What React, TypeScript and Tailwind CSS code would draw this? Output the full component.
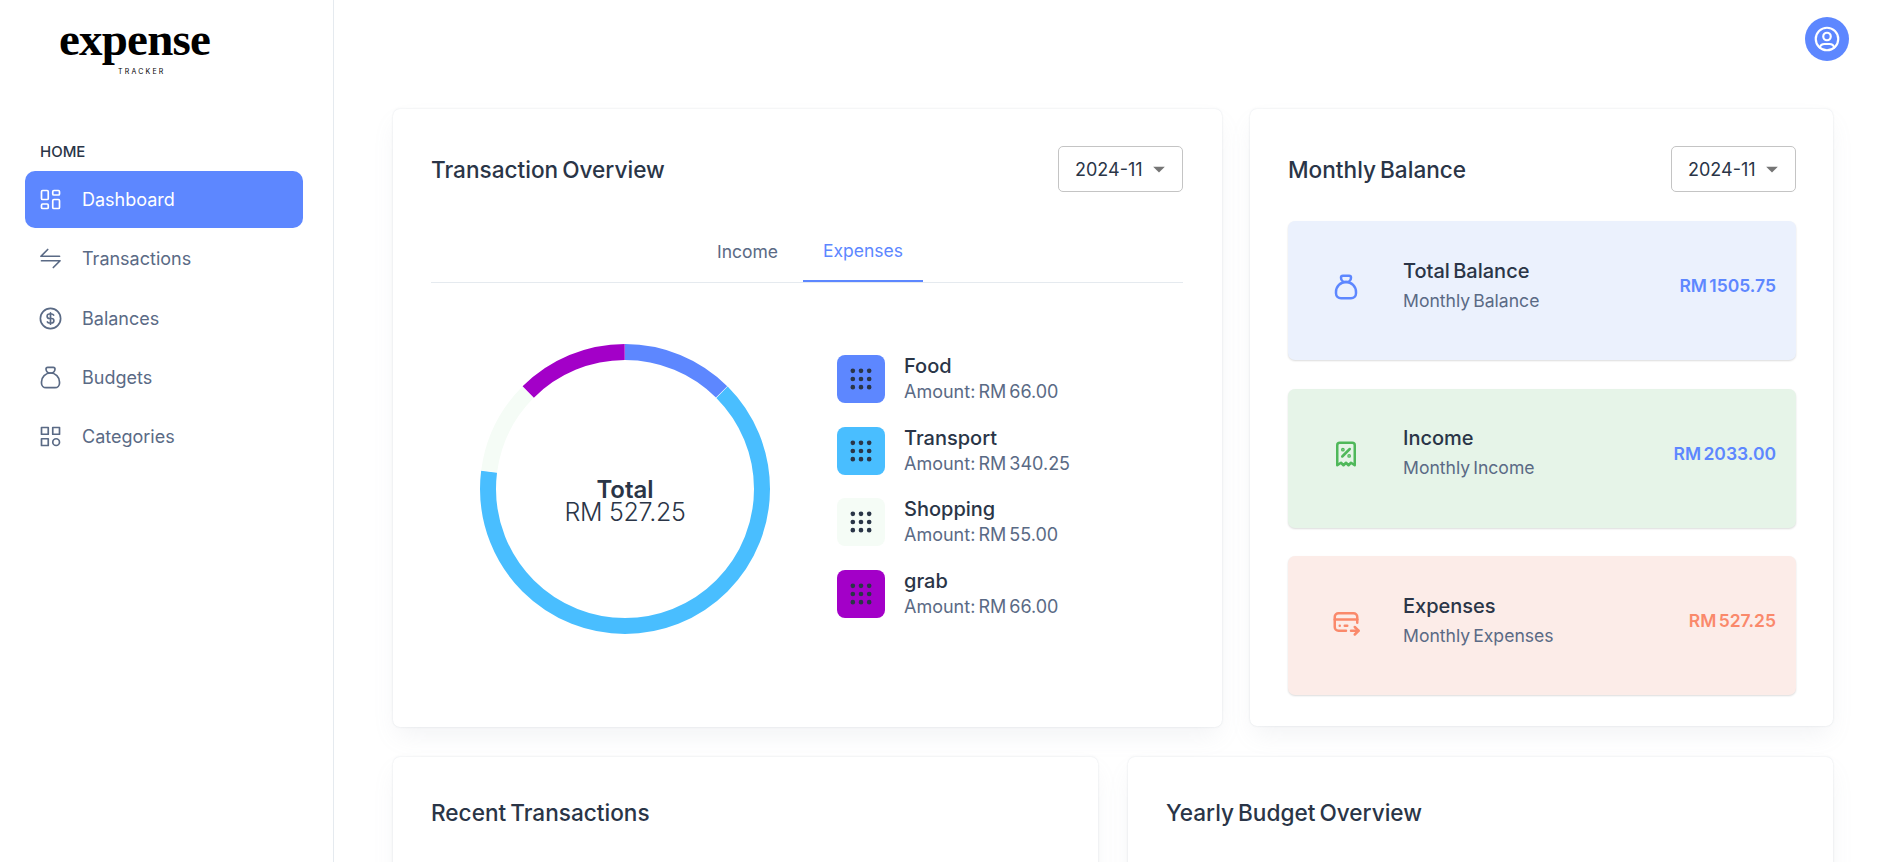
import { TbCategory, TbCoin, TbCreditCardPay, TbGridDots, TbLayoutDashboard, TbMoneybag, TbReceiptTax, TbUserCircle } from "react-icons/tb"

function ExchangeIcon({ size, className }: { size: number; strokeWidth?: number; className?: string }) {
  return (
    <svg width={size} height={size} viewBox="0 0 24 24" fill="none" stroke="currentColor" strokeWidth="1.5" strokeLinecap="round" strokeLinejoin="round" className={className}>
      <path d="M20 10H3.5l6-6" />
      <path d="M4 14h16.5l-6 6" />
    </svg>
  )
}

const navItems = [
  { label: "Dashboard", icon: TbLayoutDashboard, active: true },
  { label: "Transactions", icon: ExchangeIcon },
  { label: "Balances", icon: TbCoin },
  { label: "Budgets", icon: TbMoneybag },
  { label: "Categories", icon: TbCategory },
]

const categories = [
  { name: "Food", amount: 66, color: "#5d87ff", box: "bg-[#5d87ff]" },
  { name: "Transport", amount: 340.25, color: "#49beff", box: "bg-[#49beff]" },
  { name: "Shopping", amount: 55, color: "#f5fcf6", box: "bg-[#f5fcf6]" },
  { name: "grab", amount: 66, color: "#a300c8", box: "bg-[#a300c8]" },
]

const cardClass = "rounded-[7px] bg-white shadow-[0_0_2px_rgba(145,158,171,0.3),0_12px_24px_-4px_rgba(145,158,171,0.12)]"
const titleClass = "pt-[1px] text-[22.6px] font-medium text-[#2a3547] [word-spacing:-2px]"

function Select() {
  return (
    <div className="flex h-[46px] w-[125px] items-center rounded-[5px] border border-[#c4c4c4] pl-[16px] text-[18px] text-[#2a3547]">
      <span>2024-11</span>
      <svg className="ml-[2px] h-[28px] w-[28px]" viewBox="0 0 24 24" fill="#757575">
        <path d="M7 10l5 5 5-5z" />
      </svg>
    </div>
  )
}

function Donut() {
  const r = 137
  const circ = 2 * Math.PI * r
  const total = categories.reduce((sum, c) => sum + c.amount, 0)
  let offset = 0

  return (
    <div className="relative h-[290px] w-[290px] shrink-0">
      <svg width="290" height="290" viewBox="0 0 290 290" className="-rotate-90">
        {categories.map((c) => {
          const len = (c.amount / total) * circ
          const el = (
            <circle
              key={c.name}
              cx="145"
              cy="145"
              r={r}
              fill="none"
              stroke={c.color}
              strokeWidth="16"
              strokeDasharray={`${len - 0.6} ${circ - len + 0.6}`}
              strokeDashoffset={-offset}
            />
          )
          offset += len
          return el
        })}
      </svg>
      <div className="absolute inset-0 flex flex-col items-center justify-center pt-[23px] text-center">
        <div className="text-[24px] font-semibold leading-[22px] text-[#2a3547]">Total</div>
        <div className="text-[25px] font-light leading-[22px] tracking-[-0.3px] text-[#2a3547]">RM 527.25</div>
      </div>
    </div>
  )
}

function BalanceTile({ icon: Icon, title, sub, amount, bg, iconColor, color }: { icon: typeof TbCoin; title: string; sub: string; amount: string; bg: string; iconColor: string; color: string }) {
  return (
    <div className={`flex h-[139px] items-center rounded-[7px] pb-[8px] pl-[43px] pr-[20px] shadow-[0_1px_2px_rgba(0,0,0,0.14)] ${bg}`}>
      <Icon size={30} className={`shrink-0 ${iconColor}`} strokeWidth={2} />
      <div className="ml-[42px] flex-1 pb-[2px]">
        <div className="text-[20px] font-medium leading-[30px] text-[#2a3547] [word-spacing:-2px]">{title}</div>
        <div className="text-[17.6px] leading-[30px] text-[#5a6a85] [word-spacing:-2px]">{sub}</div>
      </div>
      <div className={`text-[17.5px] font-semibold [word-spacing:-2px] ${color}`}>{amount}</div>
    </div>
  )
}

export default function App() {
  return (
    <div className="flex h-screen overflow-hidden bg-white font-['Inter',sans-serif] text-[#2a3547]">
      <aside className="h-screen w-[334px] shrink-0 border-r border-[#e5eaef] pl-[25px] pr-[30px]">
        <div className="ml-[34px] h-[135px] w-[151px] pt-[18px]">
          <div className="h-[42px] whitespace-nowrap font-['Liberation_Serif',serif] text-[47px] font-bold leading-[42px] tracking-[-0.8px] text-black">
            expense
          </div>
          <div className="mt-[7px] pl-[59px] text-[7px] leading-[10px] tracking-[2.2px] text-black">TRACKER</div>
        </div>
        <div className="ml-[15px] h-[36px] pt-[7px] text-[15px] font-medium leading-[20px] text-[#2a3547]">HOME</div>
        <nav className="flex flex-col gap-[2.25px]">
          {navItems.map(({ label, icon: Icon, active }) => (
            <div
              key={label}
              className={`flex h-[57px] items-center rounded-[10px] pl-[12px] text-[18px] ${active ? "bg-[#5d87ff] text-white" : "text-[#5a6a85]"}`}
            >
              <Icon size={27} strokeWidth={1.5} className="shrink-0" />
              <span className="ml-[18px]">{label}</span>
            </div>
          ))}
        </nav>
      </aside>

      <div className="min-w-0 flex-1 pl-[59px] pr-[55px]">
        <header className="flex h-[109px] justify-end">
          <div className="mr-[-16px] mt-[17px] flex h-[44px] w-[44px] items-center justify-center rounded-full bg-[#5d87ff] text-white">
            <TbUserCircle size={30} strokeWidth={1.75} />
          </div>
        </header>

        <div className="flex items-start gap-[28px]">
          <section className={`h-[618px] w-[829px] shrink-0 pl-[38px] pr-[39px] pt-[37px] ${cardClass}`}>
            <div className="flex items-center justify-between">
              <h2 className={titleClass}>Transaction Overview</h2>
              <Select />
            </div>
            <div className="mt-[30px] flex justify-center gap-[5px] border-b border-[#e5eaef] pl-[6px] text-[17.5px]">
              <div className="flex h-[60px] items-center px-[20px] pt-[1px] text-[#5a6a85]">Income</div>
              <div className="-mb-px flex h-[60px] items-center border-b-2 border-[#5d87ff] px-[20px] pt-[1px] text-[#5d87ff]">Expenses</div>
            </div>
            <div className="mt-[61px] flex items-start pl-[49px]">
              <Donut />
              <div className="ml-[67px] mt-[11px] flex flex-col gap-[23.5px]">
                {categories.map((c) => (
                  <div key={c.name} className="flex h-[48px] items-center">
                    <div className={`flex h-[48px] w-[48px] items-center justify-center rounded-[8px] text-[#2a3547] ${c.box}`}>
                      <TbGridDots size={28} />
                    </div>
                    <div className="ml-[19px]">
                      <div className="text-[20px] font-medium leading-[25px] text-[#2a3547]">{c.name}</div>
                      <div className="text-[18px] leading-[25px] text-[#5a6a85] [word-spacing:-2px]">Amount: RM {c.amount.toFixed(2)}</div>
                    </div>
                  </div>
                ))}
              </div>
            </div>
          </section>

          <section className={`h-[617px] flex-1 pl-[38px] pr-[37px] pt-[37px] ${cardClass}`}>
            <div className="flex items-center justify-between">
              <h2 className={titleClass}>Monthly Balance</h2>
              <Select />
            </div>
            <div className="mt-[29px] flex flex-col gap-[28.5px]">
              <BalanceTile icon={TbMoneybag} title="Total Balance" sub="Monthly Balance" amount="RM 1505.75" bg="bg-[#ebf1fd]" iconColor="text-[#5d87ff]" color="text-[#5d87ff]" />
              <BalanceTile icon={TbReceiptTax} title="Income" sub="Monthly Income" amount="RM 2033.00" bg="bg-[#e6f4e8]" iconColor="text-[#4fb85a]" color="text-[#5d87ff]" />
              <BalanceTile icon={TbCreditCardPay} title="Expenses" sub="Monthly Expenses" amount="RM 527.25" bg="bg-[#fcece8]" iconColor="text-[#fa896b]" color="text-[#fa896b]" />
            </div>
          </section>
        </div>

        <div className="mt-[30px] flex gap-[30px]">
          <section className={`h-[300px] flex-1 px-[38px] pt-[38px] ${cardClass}`}>
            <h2 className={titleClass}>Recent Transactions</h2>
          </section>
          <section className={`h-[300px] flex-1 px-[38px] pt-[38px] ${cardClass}`}>
            <h2 className={titleClass}>Yearly Budget Overview</h2>
          </section>
        </div>
      </div>
    </div>
  )
}
